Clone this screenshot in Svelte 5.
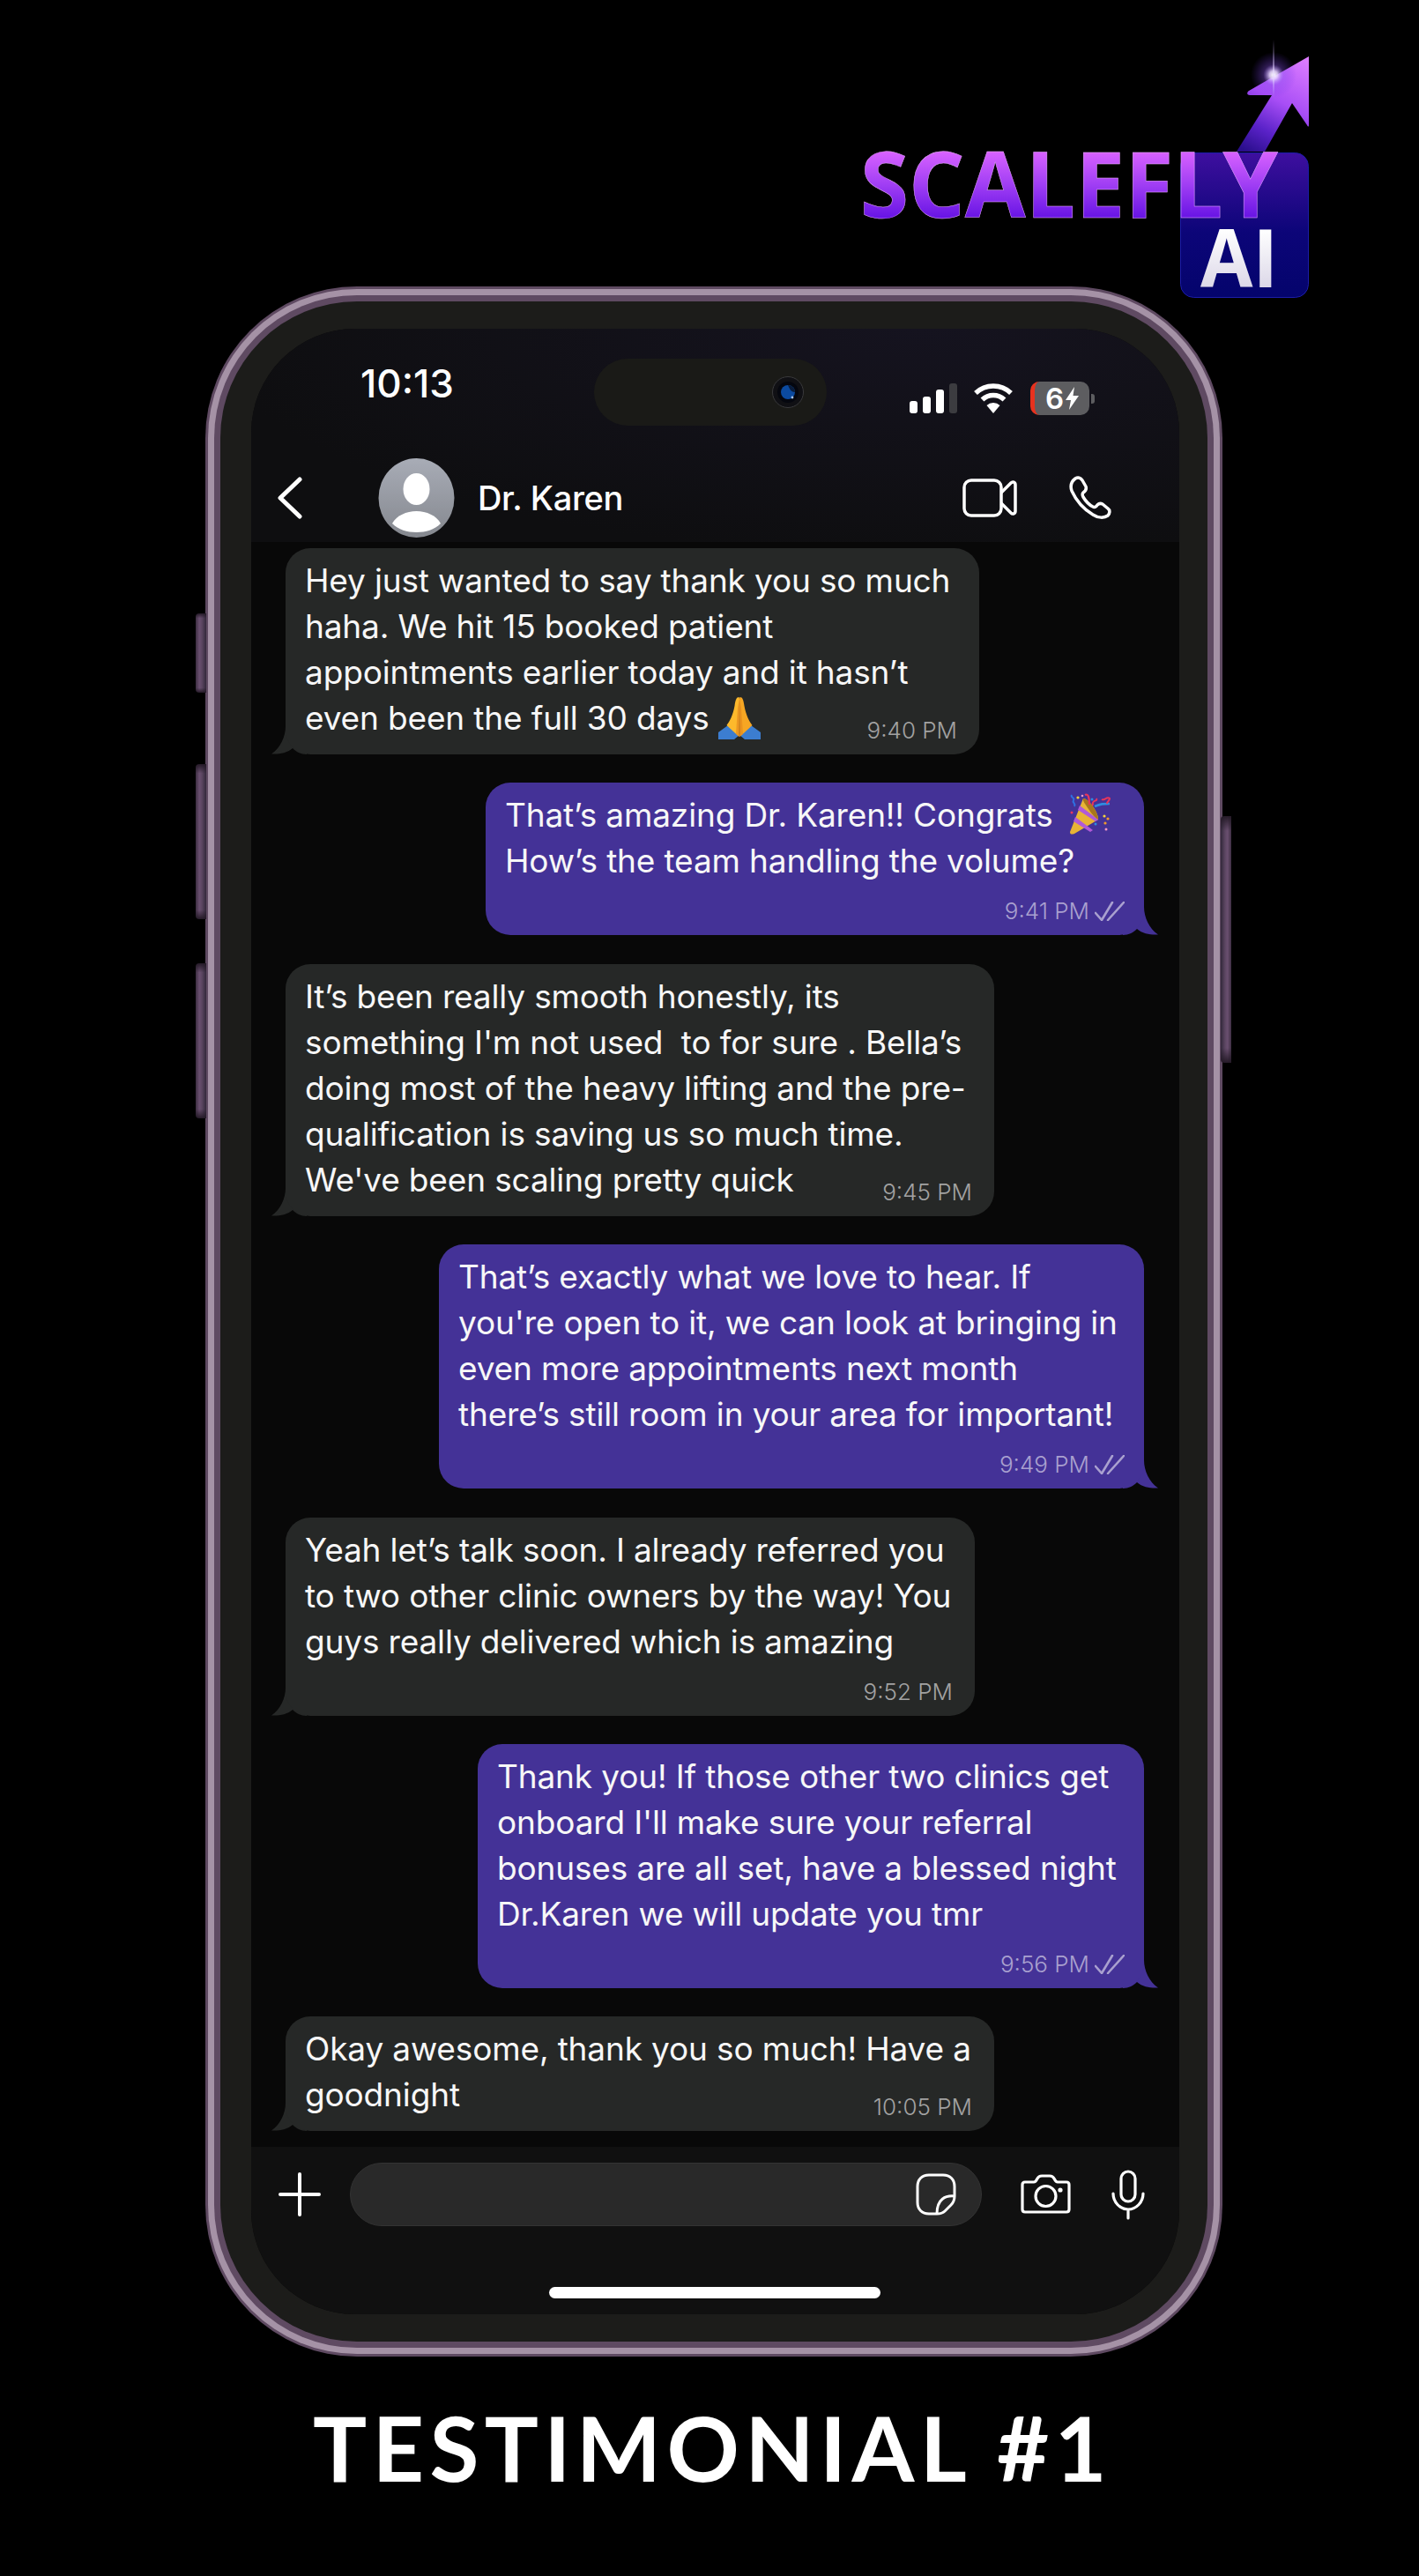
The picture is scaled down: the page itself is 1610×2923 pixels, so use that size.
<script>
  const messages = [
    { from: 'them', width: 787, time: '9:40 PM', overlap: true, lines: ['Hey just wanted to say thank you so much', 'haha. We hit 15 booked patient', 'appointments earlier today and it hasn’t', 'even been the full 30 days '], emoji: 'pray', emojiLine: 3 },
    { from: 'me', width: 747, time: '9:41 PM', lines: ['That’s amazing Dr. Karen!! Congrats ', 'How’s the team handling the volume?'], emoji: 'party', emojiLine: 0 },
    { from: 'them', width: 804, time: '9:45 PM', overlap: true, lines: ['It’s been really smooth honestly, its', 'something I\'m not used  to for sure . Bella’s', 'doing most of the heavy lifting and the pre-', 'qualification is saving us so much time.', 'We\'ve been scaling pretty quick'] },
    { from: 'me', width: 800, time: '9:49 PM', lines: ['That’s exactly what we love to hear. If', 'you\'re open to it, we can look at bringing in', 'even more appointments next month', 'there’s still room in your area for important!'] },
    { from: 'them', width: 782, time: '9:52 PM', lines: ['Yeah let’s talk soon. I already referred you', 'to two other clinic owners by the way! You', 'guys really delivered which is amazing'] },
    { from: 'me', width: 756, time: '9:56 PM', lines: ['Thank you! If those other two clinics get', 'onboard I\'ll make sure your referral', 'bonuses are all set, have a blessed night', 'Dr.Karen we will update you tmr'] },
    { from: 'them', width: 804, time: '10:05 PM', overlap: true, lines: ['Okay awesome, thank you so much! Have a', 'goodnight'] }
  ]
</script>

<div class="page">
  <div class="phone">
    <span class="side-btn b1"></span>
    <span class="side-btn b2"></span>
    <span class="side-btn b3"></span>
    <span class="side-btn b4"></span>
    <div class="rim-light">
      <div class="rim-dark">
        <div class="bezel">
          <div class="screen">
            <header class="head">
              <div class="status">
                <div class="clock">10:13</div>
                <div class="island">
                  <svg class="lens" width="36" height="36" viewBox="0 0 36 36">
                    <circle cx="18" cy="18" r="17.5" fill="#101014" stroke="#3a3a3c" />
                    <circle cx="18" cy="18" r="12" fill="#05070f" />
                    <circle cx="18" cy="18" r="8" fill="#0b4aa0" />
                    <path d="M18 10a8 8 0 0 1 8 8c-4 0-6-3-8-8z" fill="#0a1c3a" />
                    <circle cx="23" cy="24" r="1.4" fill="#a8c4e8" />
                  </svg>
                </div>
                <div class="signal">
                  <i class="bar h1"></i><i class="bar h2"></i><i class="bar h3"></i><i class="bar h4 off"></i>
                </div>
                <svg class="wifi" width="46" height="36" viewBox="0 0 46 36">
                  <path d="M3 12a29 29 0 0 1 40 0M10.500 19.500a18 18 0 0 1 25 0" fill="none" stroke="#fff" stroke-width="5.500" />
                  <path d="M23 35l-7.500-9a11 11 0 0 1 15 0z" fill="#fff" />
                </svg>
                <div class="battery">
                  <span>6</span>
                  <svg width="15" height="26" viewBox="0 0 15 26"><path d="M10 0L0 15h6l-2 11L15 10H8.500z" fill="#fff" /></svg>
                </div>
                <i class="battery-tip"></i>
              </div>
              <div class="nav">
                <svg class="back" width="28" height="48" viewBox="0 0 28 48">
                  <path d="M25 3L3 24l22 21" fill="none" stroke="#fff" stroke-width="5" stroke-linecap="round" stroke-linejoin="round" />
                </svg>
                <svg class="avatar" width="87" height="90" viewBox="0 0 87 90">
                  <defs>
                    <linearGradient id="av" x1="0" y1="0" x2="0" y2="1">
                      <stop offset="0" stop-color="#a8acb6" />
                      <stop offset="1" stop-color="#85888f" />
                    </linearGradient>
                  </defs>
                  <ellipse cx="43.500" cy="45" rx="43" ry="45" fill="url(#av)" />
                  <ellipse cx="43.500" cy="35" rx="15" ry="18" fill="#fff" />
                  <path d="M16 74c5-9 16-14 27.500-14S66 65 71 74c-7 7-17 10-27.500 10S23 81 16 74z" fill="#fff" />
                </svg>
                <div class="name">Dr. Karen</div>
                <svg class="video" width="62" height="44" viewBox="0 0 62 44" fill="none" stroke="#fff" stroke-width="3.500" stroke-linejoin="round">
                  <rect x="2" y="2" width="42" height="40" rx="8" />
                  <path d="M44 16L55 5c2-2 5-1 5 2v30c0 3-3 4-5 2L44 28" />
                </svg>
                <svg class="call" width="49" height="50" viewBox="0 0 49 50" fill="none" stroke="#fff" stroke-width="3.500" stroke-linejoin="round">
                  <path d="M7 3c3-2 6-1 8 2l4 7c1 3 0 5-3 7-1 1-1 3 0 5 3 5 7 9 11 11 2 1 4 0 5-2 2-2 4-2 6-1l6 5c3 2 2 6 0 8-4 3-11 3-17-1C17 38 8 28 3 17 1 11 3 6 7 3z" />
                </svg>
              </div>
            </header>

            <main class="chat">
              {#each messages as m}
                <div class="row {m.from}">
                  <div class="bubble" style={`width: ${m.width}px`}>
                    {#each m.lines as line, i}
                      <div class="line">{line}{#if m.emojiLine === i && m.emoji === 'pray'}<svg class="emoji pray" width="48" height="49" viewBox="0 0 48 49">
                        <path d="M0 41l11-8 13 11-6 5H0zM48 41l-11-8-13 11 6 5h18z" fill="#3c7dd0" />
                        <path d="M23.500 1c-3 0-4 3-5 10-2 11-6 18-9 22l14 13 .5-43z" fill="#fdb92c" />
                        <path d="M24.500 1c3 0 4 3 5 10 2 11 6 18 9 22L24.500 46 24 3z" fill="#f6a623" />
                        <path d="M24 3v43l-4-3 2-30zM24 3v43l4-3-2-30z" fill="#e58a1c" opacity=".7" />
                      </svg>{/if}{#if m.emojiLine === i && m.emoji === 'party'}<svg class="emoji party" width="48" height="48" viewBox="0 0 48 48" fill="none">
                        <path d="M1 44c0 3 2 3 5 2l27-16c1-6-10-24-17-24z" fill="#e8b435" />
                        <path d="M5 32l19 12 3-2L7 27zM10 19l20 13 3-2L12 14z" fill="#b05ad8" />
                        <path d="M16 6c7 0 18 18 17 24-3-2-8-7-11-12s-7-9-6-12z" fill="#a8761c" />
                        <path d="M18 2c4-2 5 4 5 11" stroke="#e8365c" stroke-width="2.200" />
                        <path d="M29 15c7-3 10-3 17-3" stroke="#2f8de0" stroke-width="2.600" />
                        <path d="M3 2c-2 3 4 3 2 6s3 3 1 7" stroke="#2f6fe0" stroke-width="2" />
                        <path d="M27 14c-2-7 6-4 4-8M37 7c3 2 6-4 9-1 0 3-3 3-3 6" stroke="#e8365c" stroke-width="2" />
                        <circle cx="10" cy="5" r="1.600" fill="#f5d33c" />
                        <circle cx="15" cy="3" r="1.300" fill="#f098c8" />
                        <circle cx="26" cy="7" r="1.500" fill="#2f8de0" />
                        <circle cx="3" cy="22" r="1.500" fill="#e8365c" />
                        <circle cx="40" cy="26" r="1.600" fill="#f5d33c" />
                        <circle cx="44" cy="29" r="1.600" fill="#f09a2c" />
                        <circle cx="41" cy="34" r="1.600" fill="#f09a2c" />
                        <circle cx="42" cy="41" r="1.500" fill="#f098c8" />
                        <circle cx="30" cy="35" r="1.500" fill="#2f8de0" />
                      </svg>{/if}</div>
                    {/each}
                    <div class="meta" class:overlap={m.overlap}>
                      <span>{m.time}</span>
                      {#if m.from === 'me'}
                        <svg class="ticks" width="34" height="22" viewBox="0 0 34 22" fill="none" stroke="#a9a0cf" stroke-width="2.600" stroke-linecap="round" stroke-linejoin="round">
                          <path d="M1 13l7 8L20 1M15 21L33 1" />
                        </svg>
                      {/if}
                    </div>
                    <svg class="tail" width="40" height="34" viewBox="0 0 40 34">
                      <path d="M16 2C16 14 10 27 0 33.500 8 34 17 33 24 27 28 31 33 34 40 34V0H16z" fill="currentColor" />
                    </svg>
                  </div>
                </div>
              {/each}
            </main>

            <footer class="composer">
              <div class="tools">
                <svg class="plus" width="48" height="50" viewBox="0 0 48 50" stroke="#fff" stroke-width="4" stroke-linecap="round">
                  <path d="M24 2v46M2 25h44" />
                </svg>
                <div class="field">
                  <svg width="46" height="48" viewBox="0 0 46 48" fill="none" stroke="#fff" stroke-width="3" stroke-linejoin="round">
                    <path d="M15 2h16c8 0 13 5 13 13v11c0 4-1 7-4 10l-7 7c-3 3-6 3-9 3H15C7 46 2 41 2 33V15C2 7 7 2 15 2z" />
                    <path d="M44 26c-10-1-20 3-20 20" />
                  </svg>
                </div>
                <svg class="cam" width="57" height="46" viewBox="0 0 57 46" fill="none" stroke="#fff" stroke-width="3.200" stroke-linejoin="round">
                  <path d="M5 9h10c2 0 3-2 4-4s3-3 5-3h9c2 0 4 1 5 3s2 4 4 4h10c2 0 3 1 3 3v28c0 2-1 3-3 3H5c-2 0-3-1-3-3V12c0-2 1-3 3-3z" />
                  <circle cx="28.500" cy="25" r="11.500" />
                  <circle cx="45" cy="18" r="2.600" fill="#fff" stroke="none" />
                </svg>
                <svg class="mic" width="38" height="57" viewBox="0 0 38 57" fill="none" stroke="#fff" stroke-width="3.200" stroke-linecap="round">
                  <rect x="11" y="2" width="16" height="34" rx="8" />
                  <path d="M2 27c0 10 8 18 17 18s17-8 17-18M19 45v10" />
                </svg>
              </div>
              <div class="home-bar"></div>
            </footer>
          </div>
        </div>
      </div>
    </div>
  </div>

  <h1 class="title">TESTIMONIAL #1</h1>

  <svg class="logo" width="540" height="320" viewBox="960 30 540 320">
    <defs>
      <linearGradient id="word" gradientUnits="userSpaceOnUse" x1="0" y1="172" x2="0" y2="247">
        <stop offset="0" stop-color="#d862ff" />
        <stop offset=".5" stop-color="#a03ef4" />
        <stop offset="1" stop-color="#6814e4" />
      </linearGradient>
      <linearGradient id="box" x1="0" y1="0" x2="0" y2="1">
        <stop offset="0" stop-color="#3e0f9f" />
        <stop offset=".55" stop-color="#0c0578" />
        <stop offset="1" stop-color="#04046c" />
      </linearGradient>
      <linearGradient id="arrow" gradientUnits="userSpaceOnUse" x1="1475" y1="64" x2="1415" y2="172">
        <stop offset="0" stop-color="#dc7cff" />
        <stop offset=".45" stop-color="#a84ef6" />
        <stop offset=".75" stop-color="#5a22c8" />
        <stop offset="1" stop-color="#2a0e8c" />
      </linearGradient>
      <linearGradient id="ai" gradientUnits="userSpaceOnUse" x1="0" y1="260" x2="0" y2="326">
        <stop offset="0" stop-color="#ffffff" />
        <stop offset="1" stop-color="#dcd8e8" />
      </linearGradient>
      <radialGradient id="glow">
        <stop offset="0" stop-color="#fff" />
        <stop offset=".18" stop-color="#e4d0ff" stop-opacity=".9" />
        <stop offset=".45" stop-color="#8a50f0" stop-opacity=".35" />
        <stop offset="1" stop-color="#6a30e8" stop-opacity="0" />
      </radialGradient>
      <linearGradient id="flare" x1="0" y1="0" x2="0" y2="1">
        <stop offset="0" stop-color="#c8a8ff" stop-opacity="0" />
        <stop offset=".6" stop-color="#e8dcff" />
        <stop offset="1" stop-color="#c8a8ff" stop-opacity="0" />
      </linearGradient>
    </defs>
    <path d="M1485 64L1417 103c-3 2-2 5 1 5h25l-40 64h32l31-55 17 25c1 2 2 2 2 0z" fill="url(#arrow)" />
    <rect x="1339.500" y="173.500" width="145" height="164" rx="15" fill="url(#box)" stroke="#1c1ca8" />
    <circle cx="1445" cy="85" r="26" fill="url(#glow)" />
    <rect x="1444.300" y="45" width="1.400" height="66" fill="url(#flare)" />
    <text x="976" y="247" textLength="474" lengthAdjust="spacingAndGlyphs" class="word" fill="url(#word)" stroke="#e8a8ff" stroke-width=".5">SCALEFLY</text>
    <text x="1362" y="326" textLength="88" lengthAdjust="spacingAndGlyphs" class="ai" fill="url(#ai)">AI</text>
  </svg>
</div>

<style>
  :global(body) {
    margin: 0;
    background: #000;
  }

  .page {
    position: relative;
    width: 1610px;
    height: 2923px;
    overflow: hidden;
    padding-top: 325px;
    box-sizing: border-box;
    background: #000;
    font-family: Inter, "Liberation Sans", sans-serif;
    color: #fff;
  }

  .phone {
    position: relative;
    margin-left: 233px;
    width: 1154px;
    height: 2349px;
    box-sizing: border-box;
    padding: 3px;
    border-radius: 172px;
    background: #5f4a62;
  }

  .side-btn {
    position: absolute;
    width: 12px;
    background:
      linear-gradient(#241a27, transparent 6%, transparent 94%, #241a27),
      linear-gradient(90deg, #3d2e42, #6a4f70 35%, #5a4560 60%, #32283a);
  }

  .b1, .b2, .b3 {
    left: -11px;
    border-radius: 4px 0 0 4px;
  }

  .b1 { top: 371px; height: 90px; }
  .b2 { top: 542px; height: 176px; }
  .b3 { top: 768px; height: 176px; }

  .b4 {
    right: -10px;
    top: 601px;
    height: 280px;
    border-radius: 0 4px 4px 0;
    transform: scaleX(-1);
  }

  .rim-light {
    height: 100%;
    box-sizing: border-box;
    padding: 7px;
    border-radius: 169px;
    background: #a592a6;
  }

  .rim-dark {
    height: 100%;
    box-sizing: border-box;
    padding: 7px;
    border-radius: 162px;
    background: #5f4a62;
  }

  .bezel {
    height: 100%;
    box-sizing: border-box;
    padding: 31px 32px 31px 35px;
    border-radius: 155px;
    background: #1c1c1a;
  }

  .screen {
    display: flex;
    flex-direction: column;
    height: 100%;
    border-radius: 118px;
    overflow: hidden;
    background: #080808;
  }

  .head {
    height: 242px;
    flex: none;
    background: radial-gradient(ellipse at 72% 0, #15131f, #0e0e10 75%);
  }

  .status {
    display: flex;
    align-items: flex-start;
    height: 147px;
    padding-left: 124px;
    box-sizing: border-box;
  }

  .clock {
    width: 265px;
    margin-top: 42px;
    font-size: 44px;
    line-height: 40px;
    font-weight: 500;
  }

  .island {
    display: flex;
    align-items: center;
    justify-content: flex-end;
    width: 264px;
    height: 76px;
    margin-top: 34px;
    padding-right: 26px;
    box-sizing: border-box;
    border-radius: 38px;
    background: #1a1a17;
  }

  .signal {
    display: flex;
    align-items: flex-end;
    gap: 6px;
    height: 34px;
    margin: 62px 0 0 94px;
  }

  .bar {
    width: 9px;
    border-radius: 3px;
    background: #fff;
  }

  .h1 { height: 14px; }
  .h2 { height: 19px; }
  .h3 { height: 27px; }
  .h4 { height: 34px; }
  .off { background: #3c3c40; }

  .wifi {
    margin: 61px 0 0 18px;
  }

  .battery {
    display: flex;
    align-items: center;
    justify-content: center;
    gap: 2px;
    width: 67px;
    height: 38px;
    margin: 60px 0 0 19px;
    box-sizing: border-box;
    border-left: 5px solid #e8321e;
    border-radius: 10px;
    background: #5d5d60;
    font-size: 33px;
    font-weight: 600;
  }

  .battery-tip {
    width: 4px;
    height: 11px;
    margin: 74px 0 0 2px;
    border-radius: 0 3px 3px 0;
    background: #5d5d60;
  }

  .nav {
    display: flex;
    align-items: center;
    height: 90px;
    padding-left: 30px;
  }

  .back {
    margin-right: 86px;
  }

  .name {
    flex: 1;
    margin-left: 26px;
    font-size: 38px;
    font-weight: 500;
    letter-spacing: -0.3px;
  }

  .video {
    margin-right: 59px;
  }

  .call {
    margin-right: 76px;
  }

  .chat {
    flex: 1;
    display: flex;
    flex-direction: column;
    gap: 32.4px;
    min-height: 0;
    overflow: hidden;
    padding: 7px 40px 0 39px;
  }

  .row {
    display: flex;
    isolation: isolate;
  }

  .row.me {
    justify-content: flex-end;
  }

  .bubble {
    position: relative;
    box-sizing: border-box;
    padding: 11px 22px 15px;
    border-radius: 28px;
    font-size: 37px;
    line-height: 52px;
    letter-spacing: -0.15px;
  }

  .them .bubble {
    background: #262827;
    color: #262827;
  }

  .me .bubble {
    background: #443297;
    color: #443297;
  }

  .line {
    color: #f7f7f7;
    white-space: pre;
  }

  .emoji {
    margin-top: -20px;
  }

  .pray { vertical-align: -11px; }

  .party {
    vertical-align: -10px;
    margin-left: 8px;
  }

  .meta {
    display: flex;
    align-items: center;
    justify-content: flex-end;
    gap: 6px;
    height: 32px;
    margin: 15px 0 -4px;
    font-size: 26px;
    line-height: 32px;
    font-weight: 300;
    letter-spacing: 0;
  }

  .meta.overlap {
    margin-top: -28px;
  }

  .them .meta {
    padding-right: 3px;
    color: #a2a2a2;
  }

  .me .meta {
    color: #a9a0cf;
  }

  .tail {
    position: absolute;
    bottom: 0;
    z-index: -1;
  }

  .them .tail {
    left: -16px;
  }

  .me .tail {
    right: -16px;
    transform: scaleX(-1);
  }

  .composer {
    position: relative;
    height: 190px;
    flex: none;
    box-sizing: border-box;
    padding-top: 18px;
    background: #101010;
  }

  .tools {
    display: flex;
    align-items: center;
    height: 72px;
    padding-left: 31px;
  }

  .field {
    display: flex;
    align-items: center;
    justify-content: flex-end;
    width: 717px;
    height: 72px;
    margin-left: 33px;
    padding-right: 28px;
    box-sizing: border-box;
    border: 1px solid #333;
    border-radius: 36px;
    background: #292929;
  }

  .cam {
    margin-left: 44px;
  }

  .mic {
    margin-left: 46px;
  }

  .home-bar {
    width: 376px;
    height: 13px;
    margin: 69px 0 0 338px;
    border-radius: 7px;
    background: #fff;
  }

  .title {
    margin: 43px 0 0;
    padding-left: 7px;
    text-align: center;
    font-family: Lato, "Liberation Sans", sans-serif;
    font-size: 102px;
    line-height: 120px;
    font-weight: 700;
    letter-spacing: 6.3px;
  }

  .logo {
    position: absolute;
    left: 960px;
    top: 30px;
  }

  .word {
    font-family: "Open Sans", sans-serif;
    font-size: 104px;
    font-weight: 700;
  }

  .ai {
    font-family: "Open Sans", sans-serif;
    font-size: 92px;
    font-weight: 700;
  }
</style>
